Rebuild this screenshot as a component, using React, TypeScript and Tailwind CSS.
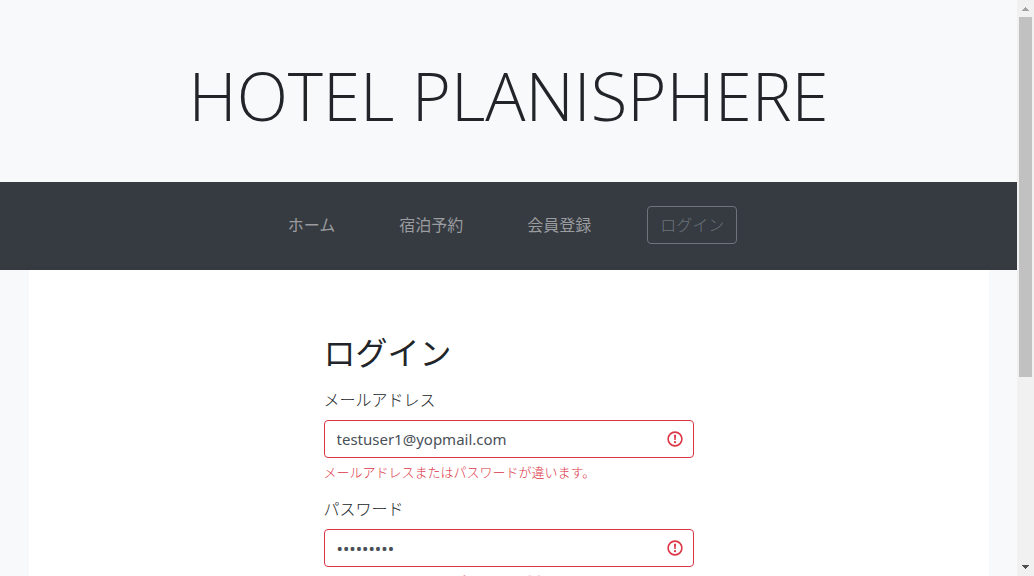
import { useState } from "react";

const links = [
  { label: "ホーム", href: "#home" },
  { label: "宿泊予約", href: "#plans" },
  { label: "会員登録", href: "#signup" },
];

function InvalidIcon() {
  return (
    <svg
      className="pointer-events-none absolute top-[11px] right-[11px] size-4"
      viewBox="0 0 16 16"
      fill="none"
      aria-hidden="true"
    >
      <circle cx="8" cy="8" r="6.9" stroke="#dc3545" strokeWidth="1.6" />
      <path d="M7 3.8h2l-.3 5.2H7.3z" fill="#dc3545" />
      <circle cx="8" cy="11.2" r="1.1" fill="#dc3545" />
    </svg>
  );
}

type FieldProps = {
  id: string;
  type: "email" | "password";
  label: string;
  initial: string;
  error: string;
};

function Field({ id, type, label, initial, error }: FieldProps) {
  const [value, setValue] = useState(initial);
  const textSize = type === "password" ? "text-[17px]" : "text-[15px]";
  return (
    <div className="mb-[14px]">
      <label htmlFor={id} className="mb-2 block font-light">
        {label}
      </label>
      <div className="relative">
        <input
          id={id}
          type={type}
          value={value}
          onChange={(e) => setValue(e.target.value)}
          aria-invalid="true"
          aria-describedby={`${id}-error`}
          className={`block h-[38px] w-full rounded border border-[#dc3545] bg-white pr-9 pl-3 text-[#495057] outline-none ${textSize}`}
        />
        <InvalidIcon />
      </div>
      <p id={`${id}-error`} className="mt-1 text-[13px] leading-[21px] font-light text-[#dc3545]">
        {error}
      </p>
    </div>
  );
}

function Scrollbar() {
  return (
    <div className="flex w-[17px] shrink-0 flex-col items-center bg-[#f1f1f1]" aria-hidden="true">
      <svg className="h-[17px] w-[17px] shrink-0" viewBox="0 0 17 17" shapeRendering="crispEdges">
        <path d="M8 7h1v1h1v1h1v1h1v1H5v-1h1V9h1V8h1z" fill="#a3a3a3" />
      </svg>
      <div className="h-[360px] w-[13px] bg-[#c1c1c1]" />
      <svg className="mt-auto h-[17px] w-[17px] shrink-0" viewBox="0 0 17 17" shapeRendering="crispEdges">
        <path d="M5 6h7v1h-1v1h-1v1H9v1H8V9H7V8H6V7H5z" fill="#505050" />
      </svg>
    </div>
  );
}

export default function App() {
  return (
    <div className="flex h-screen overflow-hidden bg-[#f8f9fb] font-['Noto_Sans','Noto_Sans_CJK_JP',sans-serif] text-base text-[#212529]">
      <div className="min-w-0 flex-1">
        <header className="pt-[52px] pb-11 text-center">
          <h1 className="font-['Open_Sans','Noto_Sans',sans-serif] text-[67px] leading-[86px] font-light">
            HOTEL PLANISPHERE
          </h1>
        </header>
        <nav className="flex items-center justify-center border-b-4 border-[#343a40] bg-[#363a41] pt-6 pb-[22px]">
          <ul className="flex items-center">
            {links.map((link) => (
              <li key={link.href}>
                <a href={link.href} className="block px-8 text-[#9a9c9f]">
                  {link.label}
                </a>
              </li>
            ))}
            <li className="px-6">
              <button
                type="button"
                className="h-[38px] rounded border border-[#6c757d] px-3 font-light text-[#6c757d]"
              >
                ログイン
              </button>
            </li>
          </ul>
        </nav>
        <main className="mx-auto max-w-[960px] bg-white px-4 pt-16 pb-16">
          <form className="mx-auto max-w-[370px]" noValidate>
            <h2 className="mb-4 text-[32px] leading-[38px]">ログイン</h2>
            <Field
              id="email"
              type="email"
              label="メールアドレス"
              initial="testuser1@yopmail.com"
              error="メールアドレスまたはパスワードが違います。"
            />
            <Field
              id="password"
              type="password"
              label="パスワード"
              initial="password1"
              error="メールアドレスまたはパスワードが違います。"
            />
          </form>
        </main>
      </div>
      <Scrollbar />
    </div>
  );
}
